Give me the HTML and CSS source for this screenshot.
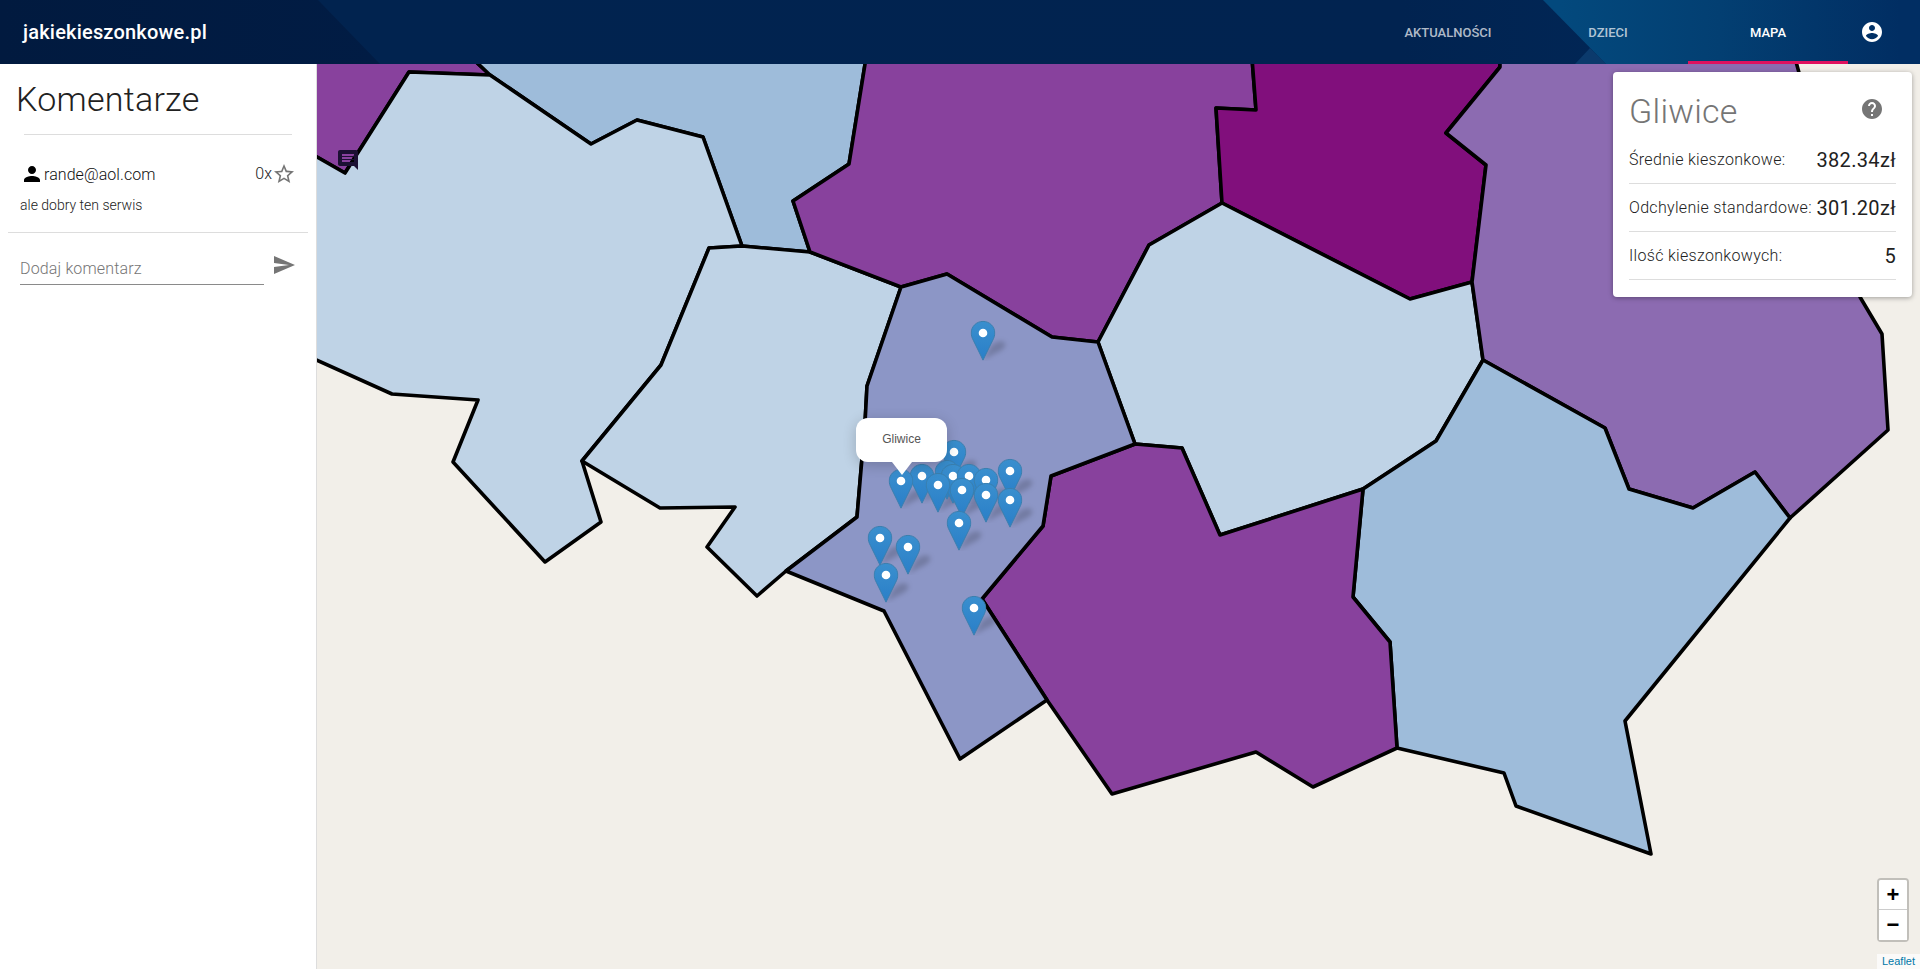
FILE: index.html
```html
<!DOCTYPE html>
<html lang="pl">
<head>
<meta charset="utf-8">
<title>jakiekieszonkowe.pl</title>
<link rel="stylesheet" href="styles.css">
</head>
<body>
<header class="topbar">
  <span class="topbar-facet"></span>
  <div class="brand">jakiekieszonkowe.pl</div>
  <nav class="tabs">
    <a class="tab">Aktualności</a>
    <a class="tab">Dzieci</a>
    <a class="tab tab-active">Mapa</a>
    <span class="tab-icon"><svg viewBox="0 0 24 24" class="icon24 white"><path d="M12 2C6.48 2 2 6.48 2 12s4.48 10 10 10 10-4.48 10-10S17.52 2 12 2zm0 3c1.66 0 3 1.34 3 3s-1.34 3-3 3-3-1.34-3-3 1.34-3 3-3zm0 14.2c-2.5 0-4.71-1.28-6-3.22.03-1.99 4-3.08 6-3.08 1.99 0 5.97 1.09 6 3.08-1.29 1.94-3.5 3.22-6 3.22z"/></svg></span>
  </nav>
</header>
<main class="layout">
  <aside class="sidebar">
    <h1 class="side-title">Komentarze</h1>
    <div class="title-rule"></div>
    <section class="comment">
      <div class="comment-head">
        <svg viewBox="0 0 24 24" class="icon24 black"><path d="M12 12c2.21 0 4-1.79 4-4s-1.79-4-4-4-4 1.79-4 4 1.79 4 4 4zm0 2c-2.67 0-8 1.34-8 4v2h16v-2c0-2.66-5.33-4-8-4z"/></svg>
        <span class="author">rande@aol.com</span>
        <span class="likes">0x</span>
        <svg viewBox="0 0 24 24" class="icon24 gray"><path d="M22 9.24l-7.19-.62L12 2 9.19 8.63 2 9.24l5.46 4.73L5.82 21 12 17.27 18.18 21l-1.63-7.03L22 9.24zM12 15.4l-3.76 2.27 1-4.28-3.32-2.88 4.38-.38L12 6.1l1.71 4.04 4.38.38-3.32 2.88 1 4.28L12 15.4z"/></svg>
      </div>
      <p class="comment-text">ale dobry ten serwis</p>
    </section>
    <div class="comment-rule"></div>
    <form class="add-comment">
      <div class="add-field">Dodaj komentarz</div>
      <svg viewBox="0 0 24 24" class="icon24 gray"><path d="M2.01 21L23 12 2.01 3 2 10l15 2-15 2z"/></svg>
    </form>
  </aside>
  <section class="map">
    <svg class="map-svg" viewBox="317 64 1603 905" preserveAspectRatio="none">
      <defs>
        <linearGradient id="pinfill" x1="0" y1="0" x2="0" y2="1">
          <stop offset="0" stop-color="#3a8fce"/>
          <stop offset="1" stop-color="#2a7fc8"/>
        </linearGradient>
        <filter id="blur" x="-50%" y="-50%" width="200%" height="200%"><feGaussianBlur stdDeviation="2.4"/></filter>
        <symbol id="shadow" viewBox="0 0 41 41" width="41" height="41">
          <path d="M12 40 L20 26 C24 21 32 20 34 23 C36 27 30 31 25 33 Z" fill="rgba(0,0,0,.18)" filter="url(#blur)"/>
        </symbol>
        <symbol id="pin" viewBox="0 0 25 41" width="25" height="41">
          <path d="M12.5 .9C6 .9.7 6 .7 12.500c0 2.400.8 4.800 2.100 7.300L12.5 39.600l9.700-19.800c1.300-2.500 2.100-4.900 2.100-7.300C24.300 6 19 .9 12.500 .9z" fill="url(#pinfill)" stroke="#3a7fae" stroke-width="1"/>
          <circle cx="12.5" cy="12.5" r="4.3" fill="#fff"/>
        </symbol>
      </defs>
      <polygon class="r-purple" points="310,58 472,58 490,75 409,72 345,173 310,153"/>
      <polygon class="r-mid" points="472,58 866,58 849,164 793,201 810,252 742,246 703,137 637,120 591,144 490,75"/>
      <polygon class="r-light" points="409,72 490,75 591,144 637,120 703,137 742,246 709,248 661,365 582,461 601,522 545,562 453,462 478,400 392,394 310,357 310,153 345,173"/>
      <polygon class="r-light" points="709,248 742,246 810,252 901,287 867,386 865,423 857,517 786,571 757,596 707,547 735,507 660,508 582,461 661,365"/>
      <polygon class="r-purple" points="866,58 1252,58 1256,110 1216,108 1222,203 1149,245 1098,342 1052,337 947,274 901,287 810,252 793,201 849,164"/>
      <polygon class="r-dark" points="1252,58 1500,58 1500,67 1446,133 1486,165 1472,282 1410,299 1222,203 1216,108 1256,110"/>
      <polygon class="r-light" points="1222,203 1410,299 1472,282 1483,360 1436,441 1363,489 1220,535 1182,448 1135,444 1098,342 1149,245"/>
      <polygon class="r-violet" points="1500,58 1795,58 1860,297 1882,334 1888,430 1790,518 1755,472 1693,508 1629,489 1605,428 1483,360 1472,282 1486,165 1446,133 1500,67"/>
      <polygon class="r-mid" points="1483,360 1605,428 1629,489 1693,508 1755,472 1790,518 1625,721 1651,854 1516,806 1504,773 1397,748 1390,642 1353,597 1363,489 1436,441"/>
      <polygon class="r-purple" points="1135,444 1182,448 1220,535 1363,489 1353,597 1390,642 1397,748 1313,787 1256,752 1112,794 1047,700 982,599 1043,526 1051,476"/>
      <polygon class="r-peri" points="901,287 947,274 1052,337 1098,342 1135,444 1051,476 1043,526 982,599 1047,700 960,759 884,611 786,571 857,517 865,423 867,386"/>
      <g>
        <use href="#shadow" x="971" y="320"/><use href="#shadow" x="942" y="439"/><use href="#shadow" x="935" y="459"/><use href="#shadow" x="941" y="463"/><use href="#shadow" x="957" y="463"/><use href="#shadow" x="974" y="467"/><use href="#shadow" x="998" y="458"/><use href="#shadow" x="889" y="468"/><use href="#shadow" x="910" y="463"/><use href="#shadow" x="926" y="472"/><use href="#shadow" x="950" y="477"/><use href="#shadow" x="974" y="482"/><use href="#shadow" x="998" y="487"/><use href="#shadow" x="947" y="510"/><use href="#shadow" x="868" y="525"/><use href="#shadow" x="896" y="534"/><use href="#shadow" x="874" y="562"/><use href="#shadow" x="962" y="595"/>
      </g>
      <g>
        <use href="#pin" x="970.5" y="320.5"/>
        <use href="#pin" x="941.5" y="439.5"/>
        <use href="#pin" x="997.5" y="458.5"/>
        <use href="#pin" x="934.5" y="459.5"/>
        <use href="#pin" x="940.5" y="463.5"/>
        <use href="#pin" x="956.5" y="463.5"/>
        <use href="#pin" x="973.5" y="467.5"/>
        <use href="#pin" x="909.5" y="463.5"/>
        <use href="#pin" x="888.5" y="468.5"/>
        <use href="#pin" x="925.5" y="472.5"/>
        <use href="#pin" x="949.5" y="477.5"/>
        <use href="#pin" x="973.5" y="482.5"/>
        <use href="#pin" x="997.5" y="487.5"/>
        <use href="#pin" x="946.5" y="510.5"/>
        <use href="#pin" x="867.5" y="525.5"/>
        <use href="#pin" x="895.5" y="534.5"/>
        <use href="#pin" x="873.5" y="562.5"/>
        <use href="#pin" x="961.5" y="595.5"/>
      </g>
    </svg>
    <svg viewBox="0 0 24 24" class="map-note"><path d="M21.99 4c0-1.1-.89-2-1.99-2H4c-1.1 0-2 .9-2 2v12c0 1.1.9 2 2 2h14l4 4-.01-18zM18 14H6v-2h12v2zm0-3H6V9h12v2zm0-3H6V6h12v2z"/></svg>
    <div class="popup">Gliwice</div>
    <div class="stats">
      <div class="stats-head">
        <h2 class="stats-title">Gliwice</h2>
        <svg viewBox="0 0 24 24" class="icon24 gray"><path d="M12 2C6.48 2 2 6.48 2 12s4.48 10 10 10 10-4.48 10-10S17.52 2 12 2zm1 17h-2v-2h2v2zm2.07-7.75l-.9.92C13.45 12.9 13 13.5 13 15h-2v-.5c0-1.1.45-2.1 1.17-2.83l1.24-1.26c.37-.36.59-.86.59-1.41 0-1.1-.9-2-2-2s-2 .9-2 2H8c0-2.21 1.79-4 4-4s4 1.79 4 4c0 .88-.36 1.68-.93 2.25z"/></svg>
      </div>
      <div class="stat-row"><span class="stat-label">Średnie kieszonkowe:</span><span class="stat-value">382.34zł</span></div>
      <div class="stat-row"><span class="stat-label">Odchylenie standardowe:</span><span class="stat-value">301.20zł</span></div>
      <div class="stat-row"><span class="stat-label">Ilość kieszonkowych:</span><span class="stat-value">5</span></div>
    </div>
    <div class="zoom">
      <div class="zoom-btn zoom-in">+</div>
      <div class="zoom-btn">−</div>
    </div>
    <div class="attribution">Leaflet</div>
  </section>
</main>
</body>
</html>
```
FILE: styles.css
```css
* { box-sizing: border-box; }
html, body { margin: 0; height: 100%; overflow: hidden; }
body { font-family: Roboto, "Liberation Sans", sans-serif; color: #212121; background: #fff; }

.icon24 { width: 24px; height: 24px; flex: none; display: block; }
.white { fill: #fff; }
.black { fill: #000; }
.gray { fill: #757575; }

.topbar {
  height: 64px;
  position: relative;
  z-index: 5;
  display: flex;
  align-items: stretch;
  justify-content: space-between;
  background: linear-gradient(90deg, #01234f 380px, #012350 1400px, #012655 1600px);
  overflow: hidden;
}
.topbar::before {
  content: "";
  position: absolute;
  inset: 0;
  background: linear-gradient(90deg, #011a3f 0, #011c44 380px);
  clip-path: polygon(0 0, 318px 0, 380px 64px, 0 64px);
}
.topbar::after {
  content: "";
  position: absolute;
  inset: 0;
  background: linear-gradient(90deg, #03497d 1560px, #033f72 1720px, #012e63 1900px);
  clip-path: polygon(1543px 0, 1920px 0, 1920px 64px, 1606px 64px);
}
.topbar-facet {
  position: absolute;
  inset: 0;
  background: #0b3a6c;
  clip-path: polygon(1590px 48px, 1606px 64px, 1575px 64px);
}
.brand {
  position: relative;
  z-index: 1;
  padding-left: 23px;
  align-self: center;
  font-size: 20px;
  font-weight: 500;
  letter-spacing: .2px;
  color: #fff;
}
.tabs { position: relative; z-index: 1; display: flex; align-items: stretch; padding-right: 36px; }
.tab {
  width: 160px;
  display: flex;
  align-items: center;
  justify-content: center;
  font-size: 13px;
  font-weight: 500;
  text-transform: uppercase;
  color: rgba(255, 255, 255, .7);
  border-bottom: 3px solid transparent;
  padding-top: 3px;
}
.tab-active { color: #fff; border-bottom-color: #e0115f; }
.tab-icon { display: flex; align-items: center; margin-left: 12px; }

.layout { display: flex; height: 905px; }

.sidebar { width: 317px; flex: none; background: #fff; padding: 0 8px; border-right: 1px solid #ddd; }
.side-title { margin: 0; padding: 14px 0 0 8px; font-size: 34px; line-height: 42px; font-weight: 300; letter-spacing: .25px; color: #212121; }
.title-rule { height: 1px; background: #ddd; margin: 14px 16px 0; }
.comment { padding: 27px 12px 0; }
.comment-head { display: flex; align-items: center; height: 24px; }
.author { font-size: 16px; font-weight: 300; letter-spacing: .07px; color: #111; flex: 1; }
.likes { font-size: 16px; font-weight: 300; margin-top: -2px; }
.comment-text { margin: 9px 0 0; font-size: 14px; line-height: 20px; font-weight: 300; color: #212121; }
.comment-rule { height: 1px; background: #ddd; margin-top: 17px; }
.add-comment { display: flex; align-items: flex-start; padding: 20px 0 0 12px; }
.add-field {
  width: 244px;
  height: 32px;
  padding-top: 6px;
  font-size: 16px;
  line-height: 19px;
  font-weight: 300;
  letter-spacing: .15px;
  color: #757575;
  border-bottom: 1px solid #8a8a8a;
}
.add-comment .icon24 { margin-left: 8px; }

.map { position: relative; flex: 1; background: #f2efe9; overflow: hidden; }
.map-svg { position: absolute; left: 0; top: 0; width: 1603px; height: 905px; display: block; }
.map-svg polygon { stroke: #000; stroke-width: 3.6; stroke-linejoin: round; }
.r-light { fill: #bfd3e6; }
.r-mid { fill: #9ebcda; }
.r-peri { fill: #8c96c6; }
.r-violet { fill: #8c6bb1; }
.r-purple { fill: #88419d; }
.r-dark { fill: #810f7c; }

.map-note { position: absolute; left: 19px; top: 84px; width: 24px; height: 24px; fill: #1c1033; }

.popup {
  position: absolute;
  left: 539px;
  top: 354px;
  width: 91px;
  height: 44px;
  background: #fff;
  border-radius: 12px;
  font: 12px/42px "Liberation Sans", sans-serif;
  text-align: center;
  color: #555;
  box-shadow: 0 3px 14px rgba(0, 0, 0, .2);
}
.popup::after {
  content: "";
  position: absolute;
  left: 36px;
  top: 44px;
  border: 10px solid transparent;
  border-top: 13px solid #fff;
  border-bottom: 0;
}

.stats {
  position: absolute;
  left: 1296px;
  top: 8px;
  width: 299px;
  height: 225px;
  padding: 0 16px;
  background: #fff;
  border-radius: 4px;
  box-shadow: 0 1px 5px rgba(0, 0, 0, .35);
}
.stats-head { height: 64px; padding-top: 10px; display: flex; align-items: center; justify-content: space-between; padding-right: 12px; }
.stats-title { margin: 4px 0 0; font-size: 34px; line-height: 44px; font-weight: 300; letter-spacing: .25px; color: #757575; }
.stats-head .icon24 { margin-top: 0; }
.stat-row { height: 48px; display: flex; align-items: center; justify-content: space-between; border-bottom: 1px solid #ddd; }
.stat-label { font-size: 16px; font-weight: 300; color: #212121; letter-spacing: .31px; }
.stat-value { font-size: 20px; font-weight: 400; letter-spacing: .35px; color: #212121; }

.zoom {
  position: absolute;
  right: 11px;
  bottom: 27px;
  width: 32px;
  border: 2px solid rgba(0, 0, 0, .2);
  border-radius: 4px;
  background-clip: padding-box;
}
.zoom-btn {
  height: 30px;
  width: 28px;
  background: #fff;
  text-align: center;
  font: bold 22px/30px "Liberation Sans", sans-serif;
  color: #000;
}
.zoom-in { border-bottom: 1px solid #ccc; border-radius: 2px 2px 0 0; }
.attribution {
  position: absolute;
  right: 0;
  bottom: 0;
  padding: 0 5px;
  background: rgba(255, 255, 255, .7);
  font: 11px/15px "Liberation Sans", sans-serif;
  color: #0078a8;
}
```
